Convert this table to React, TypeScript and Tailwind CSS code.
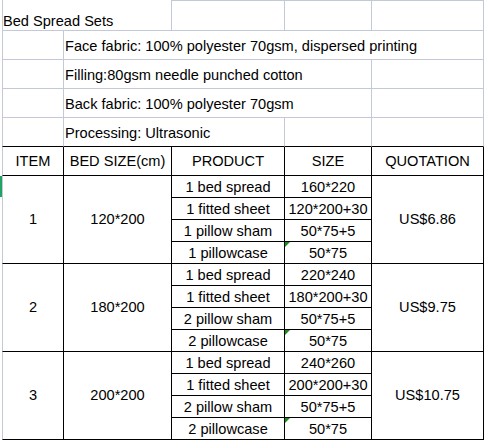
const groups = [
  {
    item: "1",
    bed: "120*200",
    price: "US$6.86",
    rows: [
      ["1 bed spread", "160*220"],
      ["1 fitted sheet", "120*200+30"],
      ["1 pillow sham", "50*75+5"],
      ["1 pillowcase", "50*75"],
    ],
  },
  {
    item: "2",
    bed: "180*200",
    price: "US$9.75",
    rows: [
      ["1 bed spread", "220*240"],
      ["1 fitted sheet", "180*200+30"],
      ["2 pillow sham", "50*75+5"],
      ["2 pillowcase", "50*75"],
    ],
  },
  {
    item: "3",
    bed: "200*200",
    price: "US$10.75",
    rows: [
      ["1 bed spread", "240*260"],
      ["1 fitted sheet", "200*200+30"],
      ["2 pillow sham", "50*75+5"],
      ["2 pillowcase", "50*75"],
    ],
  },
];

function Marker() {
  return (
    <svg className="absolute left-0 top-0" width="5" height="5" viewBox="0 0 5 5">
      <polygon points="0,0 5,0 0,5" fill="#1f8a1f" />
    </svg>
  );
}

function InfoRow({ text, span, last }: { text: string; span: "bcde" | "bcd" | "bc"; last?: boolean }) {
  const bottom = last ? "border-b-black" : "border-b-[#c3c9d6]";
  return (
    <div className="flex h-[29px] pl-[2px]">
      <div className={`w-[62px] border-l border-r border-b border-[#c3c9d6] ${bottom}`} />
      {span === "bcde" && (
        <div className={`w-[420px] flex items-center pt-[2px] pl-[1px] border-r border-b border-[#c3c9d6] ${bottom} whitespace-nowrap`}>
          {text}
        </div>
      )}
      {span === "bcd" && (
        <>
          <div className={`w-[308px] flex items-center pt-[2px] pl-[1px] border-r border-b border-[#c3c9d6] ${bottom} whitespace-nowrap`}>
            {text}
          </div>
          <div className={`w-[112px] border-r border-b border-[#c3c9d6] ${bottom}`} />
        </>
      )}
      {span === "bc" && (
        <>
          <div className={`w-[221px] flex items-center pt-[2px] pl-[1px] border-r border-b border-[#c3c9d6] ${bottom} whitespace-nowrap`}>
            {text}
          </div>
          <div className={`w-[87px] border-r border-b border-[#c3c9d6] ${bottom}`} />
          <div className={`w-[112px] border-r border-b border-[#c3c9d6] ${bottom}`} />
        </>
      )}
    </div>
  );
}

export default function App() {
  return (
    <div className="relative w-[484px] h-[440px] overflow-hidden bg-white text-black text-[14.6px] leading-[1.15] font-['Liberation_Sans',Arial,sans-serif]">
      {/* title row */}
      <div className="flex h-[31px] pl-[2px]">
        <div className="w-[170px] flex items-end border-l border-r border-b border-[#c3c9d6] whitespace-nowrap">
          Bed Spread Sets
        </div>
        <div className="w-[113px] border-t border-r border-b border-[#c3c9d6]" />
        <div className="w-[87px] border-t border-r border-b border-[#c3c9d6]" />
        <div className="w-[112px] border-t border-r border-b border-[#c3c9d6]" />
      </div>
      <InfoRow text="Face fabric: 100% polyester 70gsm, dispersed printing" span="bcde" />
      <InfoRow text="Filling:80gsm needle punched cotton" span="bcd" />
      <InfoRow text="Back fabric: 100% polyester 70gsm" span="bcd" />
      <InfoRow text="Processing: Ultrasonic" span="bc" last />

      {/* header */}
      <div className="flex h-[29px] pl-[2px]">
        <div className="w-[62px] flex items-center justify-center pt-[1px] border-l border-l-[#c3c9d6] border-r border-b border-r-black border-b-black">
          ITEM
        </div>
        <div className="w-[108px] flex items-center justify-center pt-[1px] border-r border-b border-black whitespace-nowrap">
          BED SIZE(cm)
        </div>
        <div className="w-[113px] flex items-center justify-center pt-[1px] border-r border-b border-black">
          PRODUCT
        </div>
        <div className="w-[87px] flex items-center justify-center pt-[1px] border-r border-b border-black">
          SIZE
        </div>
        <div className="w-[112px] flex items-center justify-center pt-[1px] border-r border-b border-black">
          QUOTATION
        </div>
      </div>

      {groups.map((g) => (
        <div key={g.item} className="flex h-[88px] pl-[2px]">
          <div className="w-[62px] flex items-center justify-center border-l border-l-[#c3c9d6] border-r border-b border-r-black border-b-black">
            {g.item}
          </div>
          <div className="w-[108px] flex items-center justify-center border-r border-b border-black">
            {g.bed}
          </div>
          <div className="w-[113px] flex flex-col">
            {g.rows.map(([p]) => (
              <div key={p} className="h-[22px] flex items-center justify-center pt-[2px] border-r border-b border-black whitespace-nowrap">
                {p}
              </div>
            ))}
          </div>
          <div className="w-[87px] flex flex-col">
            {g.rows.map(([p, s], i) => (
              <div key={p} className="relative h-[22px] flex items-center justify-center pt-[2px] border-r border-b border-black whitespace-nowrap">
                {i === 3 && <Marker />}
                {s}
              </div>
            ))}
          </div>
          <div className="w-[112px] flex items-center justify-center border-r border-b border-black">
            {g.price}
          </div>
        </div>
      ))}

      {/* selected row indicator */}
      <div className="absolute left-0 top-[176px] w-[2px] h-[21px] bg-[#21a366]" />
    </div>
  );
}
